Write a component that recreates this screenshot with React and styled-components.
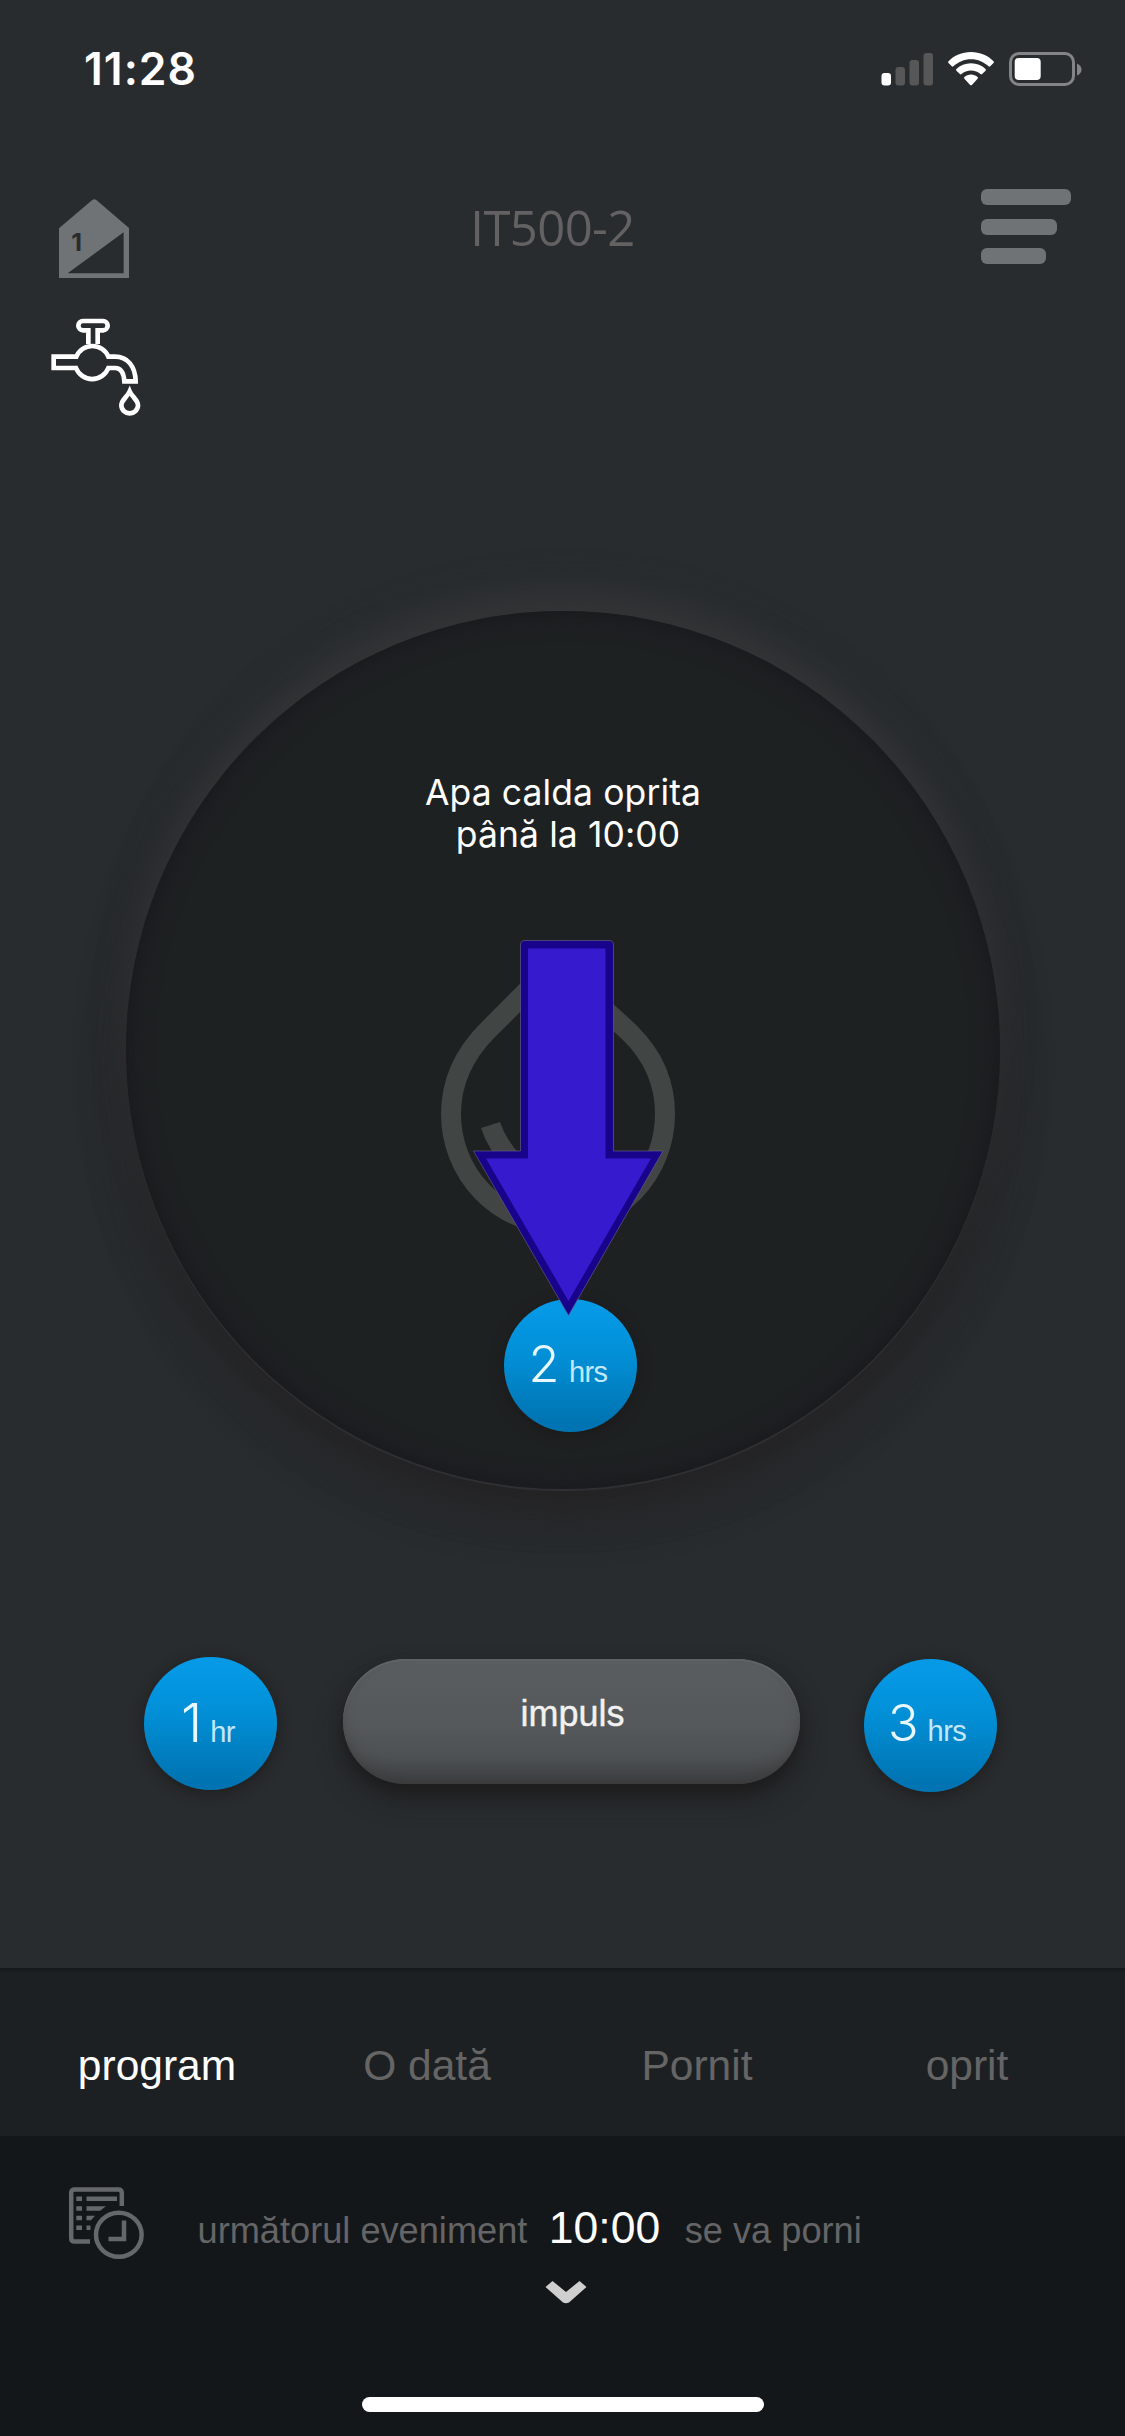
import React from "react";
import styled, { createGlobalStyle } from "styled-components";

const GlobalStyle = createGlobalStyle`
  *, *::before, *::after { box-sizing: border-box; }
  body { margin: 0; background: #282c2e; }
`;

const helvetica = `"Liberation Sans", Arial, sans-serif`;
const system = `Inter, "Liberation Sans", sans-serif`;

const Screen = styled.main`
  display: flex;
  flex-direction: column;
  width: 1125px;
  height: 2436px;
  overflow: hidden;
  background: #282c2e;
  color: #fff;
  font-family: ${helvetica};
`;

const StatusBar = styled.div`
  display: flex;
  justify-content: space-between;
  align-items: flex-start;
  height: 188px;
  padding: 42px 43px 0 84px;
`;

const Clock = styled.time`
  font: 600 44.5px/54px ${system};
  letter-spacing: 1px;
`;

const StatusIcons = styled.div`
  display: flex;
  gap: 15px;
  padding-top: 10px;
  svg { display: block; }
`;

const Header = styled.header`
  display: flex;
  justify-content: space-between;
  align-items: flex-start;
  height: 92px;
  padding: 0 54px 0 58.7px;
`;

const HouseIcon = styled.svg`
  display: block;
  width: 70.3px;
  height: 79.3px;
  margin-top: 11px;
`;

const Title = styled.h1`
  margin: 6px 0 0 -5px;
  font: 400 49px/66px "Open Sans", sans-serif;
  letter-spacing: -0.6px;
  color: #636161;
`;

const MenuButton = styled.button`
  display: flex;
  flex-direction: column;
  gap: 13.5px;
  width: 90px;
  margin-top: 1px;
  padding: 0;
  border: 0;
  background: none;
`;

const MenuLine = styled.span`
  width: ${(p) => p.$width}px;
  height: 16px;
  border-radius: 6px;
  background: #6f7376;
`;

const ZoneRow = styled.div`
  height: 331px;
  padding: 36.7px 0 0 50px;
`;

const TapIcon = styled.svg`
  display: block;
  width: 91.7px;
  height: 100px;
`;

const Dial = styled.section`
  position: relative;
  display: flex;
  flex-direction: column;
  align-items: center;
  flex: none;
  width: 874px;
  height: 878px;
  margin-left: 126px;
  padding-top: 160.5px;
  border-radius: 50%;
  background: #1e2122;
  box-shadow:
    inset 0 0 22px 4px #1a191d,
    0 2px 1px #303134,
    0 -26px 34px -4px rgba(60, 60, 61, 0.6),
    0 32px 44px -4px rgba(36, 33, 34, 0.7),
    0 10px 50px rgba(42, 40, 41, 0.4);
`;

const DialText = styled.p`
  margin: 0;
  font: 400 35.5px/42px ${system};
  letter-spacing: 0.1px;
  text-align: center;
  white-space: pre;
`;

const DropIcon = styled.svg`
  display: block;
  width: 240px;
  height: 294px;
  margin: 84.5px 10px 0 0;
`;

const Arrow = styled.svg`
  position: absolute;
  left: 345px;
  top: 327px;
  width: 194px;
  height: 380px;
`;

const Badge = styled.button`
  display: flex;
  align-items: baseline;
  flex: none;
  width: 133px;
  height: 133px;
  margin: ${(p) => p.$margin || "0"};
  padding: ${(p) => p.$padding};
  border: 0;
  border-radius: 50%;
  background: linear-gradient(#0599e6 8%, #0290d8 40%, #0074b2 92%);
  box-shadow: 0 3px 12px 2px rgba(28, 22, 22, 0.55);
  color: #e9f8ff;
`;

const Amount = styled.span`
  font: ${(p) => p.$weight} ${(p) => p.$size}px/60px ${system};
`;

const Unit = styled.span`
  margin-left: ${(p) => p.$gap}px;
  font: 400 29px/34px ${helvetica};
  letter-spacing: -0.6px;
  color: #c3e8fb;
`;

const BoostRow = styled.div`
  display: flex;
  align-items: flex-start;
  height: 479px;
  padding: 168px 128px 0 144px;
`;

const BoostButton = styled.button`
  width: 457px;
  height: 125px;
  margin: 2px 64px 0 66px;
  padding: 0 0 15px 2px;
  border: 0;
  border-radius: 62.5px;
  background: linear-gradient(#5a5d5f, #55585a 55%, #4e5153 78%, #424547 94%, #403f40);
  box-shadow:
    inset 0 2px 1px #606365,
    inset 0 -9px 14px -4px rgba(55, 55, 56, 0.65),
    0 9px 14px -1px #1e1d1e,
    0 14px 26px rgba(30, 27, 27, 0.55);
  font: 400 36px/44px ${helvetica};
  -webkit-text-stroke: 0.4px #f1f1f1;
  color: #f1f1f1;
`;

const Tabs = styled.nav`
  display: grid;
  grid-template-columns: repeat(4, 270px);
  align-items: start;
  flex: none;
  height: 168px;
  padding: 74px 0 0 22px;
  background: linear-gradient(#15181b, #1d2023 5px);
`;

const Tab = styled.button`
  padding: 0;
  border: 0;
  background: none;
  font: 400 42.5px/48px ${helvetica};
  color: ${(p) => (p.$active ? "#fff" : "#666565")};
`;

const Footer = styled.footer`
  display: flex;
  flex-direction: column;
  flex: none;
  height: 300px;
  padding-top: 51px;
  background: #141719;
`;

const EventRow = styled.div`
  display: flex;
  align-items: flex-start;
  height: 94px;
  padding-left: 66px;
`;

const EventText = styled.div`
  display: flex;
  align-items: baseline;
  margin: 16px 0 0 49.5px;
  font-size: 36.2px;
  line-height: 50px;
  color: #656567;
  white-space: nowrap;
`;

const EventTime = styled.strong`
  margin: 0 24.5px 0 21.5px;
  font-size: 44.5px;
  font-weight: 400;
  color: #fff;
`;

const Chevron = styled.svg`
  display: block;
  width: 42px;
  height: 23px;
  margin-left: 545px;
`;

const HomeIndicator = styled.div`
  width: 402px;
  height: 15px;
  margin: 93px 0 0 362px;
  border-radius: 8px;
  background: #fff;
`;

function Hours({ amount, unit, gap, margin, padding, weight = 350, size = 50.5 }) {
  return (
    <Badge $margin={margin} $padding={padding}>
      <Amount $weight={weight} $size={size}>{amount}</Amount>
      <Unit $gap={gap}>{unit}</Unit>
    </Badge>
  );
}

function Status() {
  return (
    <StatusIcons>
      <svg width="52" height="34" viewBox="881.500 52 52 34">
        <rect x="882" y="73" width="9.5" height="12.5" rx="3" fill="#fff" />
        <rect x="896" y="67" width="9.5" height="18.5" rx="3" fill="#575758" />
        <rect x="910" y="60" width="9.5" height="25.5" rx="3" fill="#575758" />
        <rect x="924" y="53" width="9.5" height="32.5" rx="3" fill="#575758" />
      </svg>
      <svg width="46" height="34" viewBox="0 0 46 34" fill="#fff">
        <path d="M23 0C14 0 6 3.500.5 9.200q-.8.900 0 1.800l3.300 3.300q.8.700 1.600 0C10 9.900 16.200 7.200 23 7.200s13 2.700 17.600 7.100q.8.700 1.600 0l3.300-3.300q.8-.9 0-1.800C40 3.500 32 0 23 0Z" />
        <path d="M23 11.300c-5.700 0-10.800 2.200-14.600 5.700q-.8.900 0 1.700l3.500 3.400q.8.700 1.700 0C16 19.900 19.300 18.600 23 18.600s7 1.300 9.400 3.500q.9.700 1.700 0l3.500-3.400q.8-.8 0-1.700C33.800 13.500 28.700 11.300 23 11.300Z" />
        <path d="M23 22.600c-2.600 0-4.900.9-6.600 2.500q-.8.800 0 1.600l5.700 6.200q.9.800 1.800 0l5.700-6.200q.8-.8 0-1.600C27.900 23.500 25.600 22.600 23 22.600Z" />
      </svg>
      <svg width="73" height="34" viewBox="1009 52 73 34">
        <rect x="1010.500" y="53.500" width="63" height="31" rx="8.500" fill="none" stroke="#838485" strokeWidth="3" />
        <rect x="1014.700" y="58" width="26" height="22" rx="4" fill="#fff" />
        <path d="M1077 63.500q4.500 2 4.500 6t-4.500 6z" fill="#838485" />
      </svg>
    </StatusIcons>
  );
}

function ScheduleIcon() {
  return (
    <svg width="82" height="78" viewBox="66 2187 82 78" fill="none" stroke="#65686a" strokeWidth="4.500">
      <path d="M121.800 2206V2193q0-3.600-3.600-3.600H74.800q-3.600 0-3.600 3.600V2238q0 3.600 3.600 3.600H90" />
      <path d="M76.300 2198.700h5.700M76.300 2208.500h5.700M76.300 2218h5.700M76.300 2227.700h5.700M86.500 2227.700h4" />
      <path d="M86.500 2196.500H117v4.500H86.500zM86.500 2206.300H106l-6 4.400H86.500zM86.500 2215.800H95l-4 4.400h-4.500z" fill="#65686a" stroke="none" />
      <ellipse cx="118.800" cy="2234.700" rx="22.800" ry="22" />
      <path d="M124 2220.500v18.500H108.500" />
    </svg>
  );
}

export default function App() {
  return (
    <>
      <GlobalStyle />
      <Screen>
        <StatusBar>
          <Clock>11:28</Clock>
          <Status />
        </StatusBar>

        <Header>
          <HouseIcon viewBox="176 597 211 238">
            <path
              fill="#6f7376"
              fillRule="evenodd"
              d="M275 601q7-7 14 0L387 685V835H176V685ZM370 697L202 820H370Z"
            />
            <text x="213" y="753" fontFamily="Inter, sans-serif" fontWeight="700" fontSize="75" fill="#282c2e">1</text>
          </HouseIcon>
          <Title>IT500-2</Title>
          <MenuButton aria-label="Menu">
            <MenuLine $width={90} />
            <MenuLine $width={76} />
            <MenuLine $width={65.5} />
          </MenuButton>
        </Header>

        <ZoneRow>
          <TapIcon viewBox="150 950 275 300" fill="none" stroke="#fff" strokeWidth="14">
            <path d="M265 1031V990H249a14 14 0 0 1 0-28H309a14 14 0 0 1 0 28H293V1031" />
            <path d="M229 1069H161V1103H228A52 52 0 0 0 325 1103H346C361 1103 371 1113 373 1143H407C406 1098 383 1069 345 1069H325A52 52 0 0 0 229 1069Z" />
            <path d="M389 1173C381 1191 364 1199 364 1215A25 24 0 0 0 414 1215C414 1199 397 1191 389 1173Z" />
          </TapIcon>
        </ZoneRow>

        <Dial>
          <DialText>{"Apa calda oprita\n până la 10:00"}</DialText>
          <DropIcon viewBox="438 940 240 294" fill="none" stroke="#414543" strokeWidth="20">
            <path d="M564 955L528 990L488 1030C463 1055 451 1083 451 1114A107 110 0 0 0 665 1114C665 1083 653 1056 631 1034Q624 1027 606 1011Z" />
            <path d="M490.500 1125Q497 1145 514 1163" />
          </DropIcon>
          <Hours amount="2" unit="hrs" gap={9.5} margin="65px 0 0 14px" padding="35px 0 0 25px" />
          <Arrow viewBox="471 938 194 380">
            <path fill="#17048b" stroke="#6b6690" strokeWidth="0.600" d="M525 940.500H609Q613.500 940.500 613.500 945V1151H663L568.500 1315.500L473.500 1151H520.500V945Q520.500 940.500 525 940.500Z" />
            <path fill="#351bcd" d="M528 948.500H605.500V1158.500H651L568.500 1301L486 1158.500H528Z" />
          </Arrow>
        </Dial>

        <BoostRow>
          <Hours amount="1" unit="hr" gap={8} padding="36px 0 0 37px" size={54} />
          <BoostButton>impuls</BoostButton>
          <Hours amount="3" unit="hrs" gap={9} margin="1.500px 0 0" padding="34px 0 0 24px" />
        </BoostRow>

        <Tabs>
          <Tab $active>program</Tab>
          <Tab>O dată</Tab>
          <Tab>Pornit</Tab>
          <Tab>oprit</Tab>
        </Tabs>

        <Footer>
          <EventRow>
            <ScheduleIcon />
            <EventText>
              <span>următorul eveniment</span>
              <EventTime>10:00</EventTime>
              <span>se va porni</span>
            </EventText>
          </EventRow>
          <Chevron viewBox="545 2281 42 23">
            <path fill="#cfcfcf" d="M552.500 2281L566 2292L579.500 2281L586.500 2287L569 2302.500Q566 2304 563 2302.500L545.500 2287Z" />
          </Chevron>
          <HomeIndicator />
        </Footer>
      </Screen>
    </>
  );
}
